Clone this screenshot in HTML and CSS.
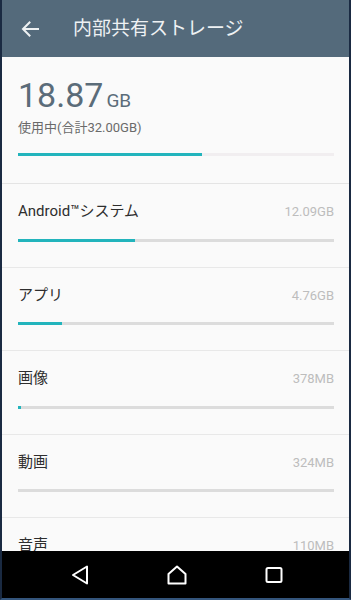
FILE: index.html
```html
<!DOCTYPE html>
<html lang="ja">
<head>
<meta charset="utf-8">
<link rel="stylesheet" href="styles.css">
</head>
<body>
<div class="frame">
  <header class="appbar">
    <svg class="back" width="24" height="24" viewBox="0 0 24 24"><path d="M20 12H5.5M11.5 5.5L5 12l6.5 6.5" fill="none" stroke="#eef1f3" stroke-width="2" stroke-linecap="square"/></svg>
    <h1 class="title">内部共有ストレージ</h1>
  </header>
  <main class="content">
    <section class="summary">
      <div class="used"><span class="num">18.87</span><span class="unit">GB</span></div>
      <div class="sub">使用中(合計32.00GB)</div>
      <div class="track light"><div class="fill" style="width:58.2%"></div></div>
    </section>
    <div class="row">
      <div class="line"><span class="label">Android™システム</span><span class="size">12.09GB</span></div>
      <div class="track"><div class="fill" style="width:37%"></div></div>
    </div>
    <div class="row">
      <div class="line"><span class="label">アプリ</span><span class="size">4.76GB</span></div>
      <div class="track"><div class="fill" style="width:14%"></div></div>
    </div>
    <div class="row">
      <div class="line"><span class="label">画像</span><span class="size">378MB</span></div>
      <div class="track"><div class="fill" style="width:1%"></div></div>
    </div>
    <div class="row">
      <div class="line"><span class="label">動画</span><span class="size">324MB</span></div>
      <div class="track"><div class="fill" style="width:0%"></div></div>
    </div>
    <div class="row">
      <div class="line"><span class="label">音声</span><span class="size">110MB</span></div>
      <div class="track"><div class="fill" style="width:0%"></div></div>
    </div>
  </main>
  <nav class="navbar">
    <svg width="24" height="24" viewBox="0 0 24 24"><path d="M19 3.5v17L5 12z" fill="none" stroke="#fff" stroke-width="2" stroke-linejoin="round"/></svg>
    <svg width="24" height="24" viewBox="0 0 24 24"><path d="M12 3.5l8.5 7.5v9.5h-17V11z" fill="none" stroke="#fff" stroke-width="2" stroke-linejoin="round"/></svg>
    <svg width="24" height="24" viewBox="0 0 24 24"><rect x="4.5" y="5" width="15" height="14" rx="1.5" fill="none" stroke="#fff" stroke-width="2"/></svg>
  </nav>
</div>
</body>
</html>
```
FILE: styles.css
```css
* { box-sizing: border-box; margin: 0; padding: 0; }
html, body { width: 351px; height: 600px; overflow: hidden; }
body { font-family: Roboto, "Noto Sans CJK JP", sans-serif; background: #1b2a40; }
.frame {
  width: 351px; height: 600px;
  display: flex; flex-direction: column;
  border-left: 2px solid #1a2a42;
  border-right: 2px solid #1a2a42;
  border-bottom: 2px solid #34557c;
  background: #fafafa;
}
.appbar {
  height: 57px; flex: none;
  background: #546a7b;
  display: flex; align-items: center;
}
.back { margin-left: 16px; margin-top: 1px; }
.title {
  margin-left: 31px;
  font-size: 19px; font-weight: 400;
  color: #eef1f3; line-height: 24px;
  margin-top: 1px;
}
.content { flex: 1; overflow: hidden; background: #fafafa; }
.summary {
  height: 127px;
  padding: 18px 15px 0 16px;
  border-bottom: 1px solid #e4e4e4;
}
.used { display: flex; align-items: baseline; height: 40px; line-height: 40px; color: #5b6c79; }
.num { font-size: 34px; }
.unit { font-size: 19px; margin-left: 3px; }
.sub { margin-top: 4px; font-size: 13px; line-height: 18px; color: #6a6a6a; }
.track { height: 3px; background: #dcdcdc; }
.track.light { margin-top: 16px; background: #f1eef0; }
.fill { height: 100%; background: #22b4bc; }
.row {
  height: 83.5px;
  padding: 17px 15px 0 16px;
  border-bottom: 1px solid #e8e8e8;
}
.line { display: flex; justify-content: space-between; align-items: baseline; line-height: 20px; }
.label { font-size: 15px; color: #2e2e2e; }
.size { font-size: 13px; color: #bdbdbd; }
.row .track { margin-top: 16.5px; }
.navbar {
  height: 47px; flex: none;
  background: #000;
  display: flex; align-items: center;
  padding-left: 66px;
  gap: 73px;
}
```
